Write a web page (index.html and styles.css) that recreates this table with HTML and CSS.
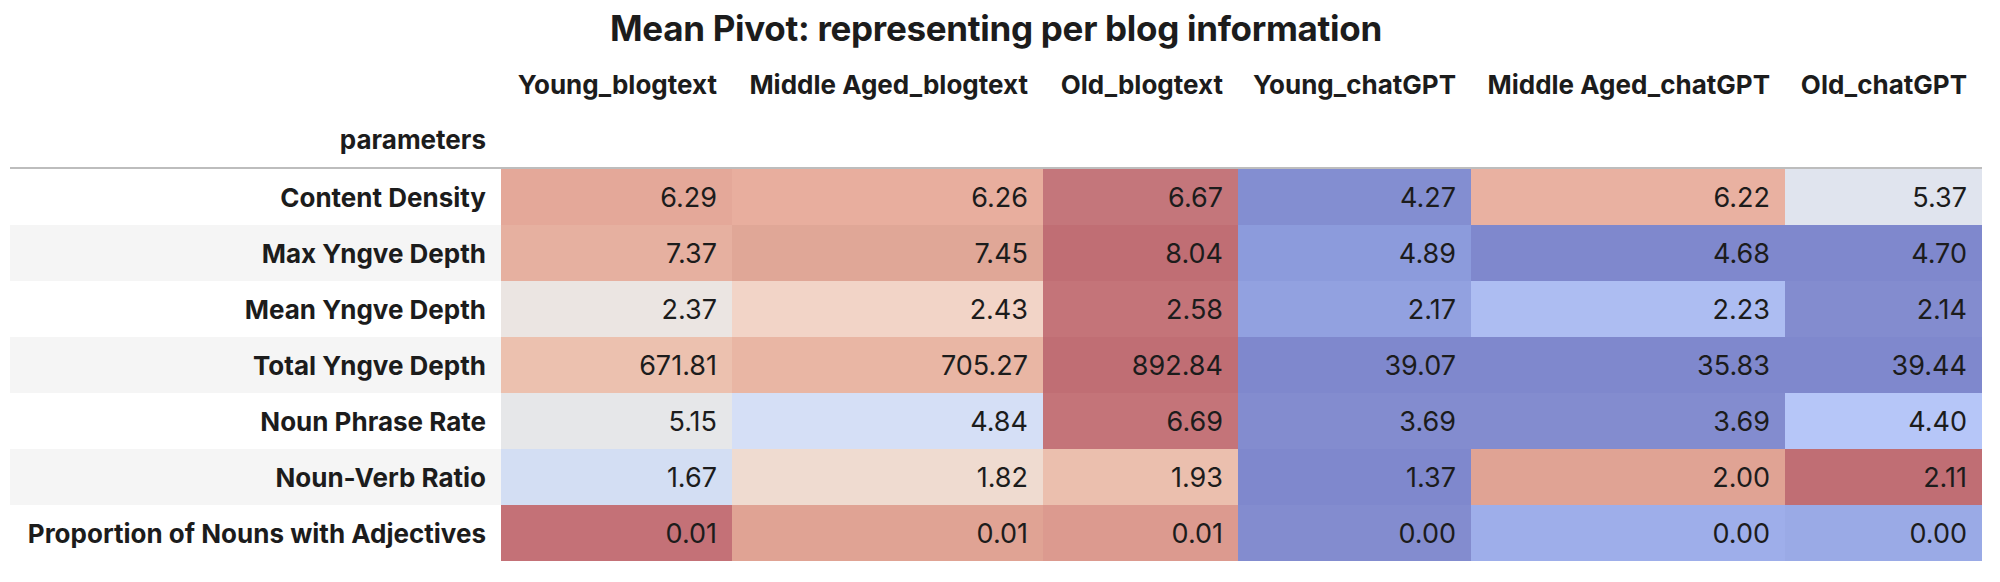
FILE: index.html
```html
<!DOCTYPE html>
<html>
<head>
<meta charset="utf-8">
<link rel="stylesheet" href="styles.css">
</head>
<body>
<table class="pivot">
  <caption class="title">Mean Pivot: representing per blog information</caption>
  <colgroup>
    <col class="c-label">
    <col class="c1">
    <col class="c2">
    <col class="c3">
    <col class="c4">
    <col class="c5">
    <col class="c6">
  </colgroup>
  <thead>
    <tr class="hrow1">
      <th class="blank"></th>
      <th>Young_blogtext</th>
      <th>Middle Aged_blogtext</th>
      <th>Old_blogtext</th>
      <th>Young_chatGPT</th>
      <th>Middle Aged_chatGPT</th>
      <th>Old_chatGPT</th>
    </tr>
    <tr class="hrow2">
      <th>parameters</th>
      <th></th><th></th><th></th><th></th><th></th><th></th>
    </tr>
  </thead>
  <tbody>
    <tr>
      <th>Content Density</th>
      <td style="background:#e4a899">6.29</td>
      <td style="background:#e8ae9e">6.26</td>
      <td style="background:#c4767b">6.67</td>
      <td style="background:#838ed1">4.27</td>
      <td style="background:#e9b1a1">6.22</td>
      <td style="background:#e0e4ee">5.37</td>
    </tr>
    <tr class="alt">
      <th>Max Yngve Depth</th>
      <td style="background:#e6b0a0">7.37</td>
      <td style="background:#e0a797">7.45</td>
      <td style="background:#c06e74">8.04</td>
      <td style="background:#8c9bdc">4.89</td>
      <td style="background:#7f88cd">4.68</td>
      <td style="background:#7f88cd">4.70</td>
    </tr>
    <tr>
      <th>Mean Yngve Depth</th>
      <td style="background:#ebe5e2">2.37</td>
      <td style="background:#f2d4c7">2.43</td>
      <td style="background:#c47479">2.58</td>
      <td style="background:#92a1e0">2.17</td>
      <td style="background:#adbdf2">2.23</td>
      <td style="background:#838ccf">2.14</td>
    </tr>
    <tr class="alt">
      <th>Total Yngve Depth</th>
      <td style="background:#ecc1af">671.81</td>
      <td style="background:#e9b6a4">705.27</td>
      <td style="background:#c06e74">892.84</td>
      <td style="background:#7f88cd">39.07</td>
      <td style="background:#7f88cd">35.83</td>
      <td style="background:#7f88cd">39.44</td>
    </tr>
    <tr>
      <th>Noun Phrase Rate</th>
      <td style="background:#e6e7e9">5.15</td>
      <td style="background:#d5dff6">4.84</td>
      <td style="background:#c47479">6.69</td>
      <td style="background:#838ccf">3.69</td>
      <td style="background:#838ccf">3.69</td>
      <td style="background:#b6c6f8">4.40</td>
    </tr>
    <tr class="alt">
      <th>Noun-Verb Ratio</th>
      <td style="background:#d3def3">1.67</td>
      <td style="background:#efdbd0">1.82</td>
      <td style="background:#ebbfae">1.93</td>
      <td style="background:#7f88cd">1.37</td>
      <td style="background:#e0a394">2.00</td>
      <td style="background:#c06e74">2.11</td>
    </tr>
    <tr>
      <th>Proportion of Nouns with Adjectives</th>
      <td style="background:#c47177">0.01</td>
      <td style="background:#e0a394">0.01</td>
      <td style="background:#dc9a8f">0.01</td>
      <td style="background:#838ccf">0.00</td>
      <td style="background:#9eaeea">0.00</td>
      <td style="background:#9aaae6">0.00</td>
    </tr>
  </tbody>
</table>
</body>
</html>
```

FILE: styles.css
```css
html, body {
  margin: 0;
  padding: 0;
  background: #ffffff;
}
body {
  font-family: Inter, "Noto Sans", "Liberation Sans", sans-serif;
  color: #1c1c1c;
}
.pivot {
  margin-left: 10px;
  border-collapse: collapse;
  border-spacing: 0;
  table-layout: fixed;
  width: 1972px;
}
.title {
  height: 56px;
  line-height: 56px;
  font-size: 35px;
  font-weight: 700;
  letter-spacing: -0.3px;
  text-align: center;
  color: #1c1c1c;
}
.c-label { width: 491px; }
.c1 { width: 231px; }
.c2 { width: 311px; }
.c3 { width: 195px; }
.c4 { width: 233px; }
.c5 { width: 314px; }
.c6 { width: 197px; }

.pivot th,
.pivot td {
  padding: 0 15px 0 0;
  text-align: right;
  white-space: nowrap;
  vertical-align: middle;
}
.pivot th {
  font-size: 26px;
  font-weight: 700;
}
.pivot td {
  font-size: 27px;
  font-weight: 400;
}
.hrow1 th {
  height: 56px;
}
.hrow2 th {
  height: 55px;
  border-bottom: 2px solid #bdbdbd;
}
.pivot tbody tr {
  height: 56px;
}
.pivot tbody th,
.pivot tbody td {
  height: 56px;
}
.pivot tbody tr.alt th {
  background: #f5f5f5;
}
```
